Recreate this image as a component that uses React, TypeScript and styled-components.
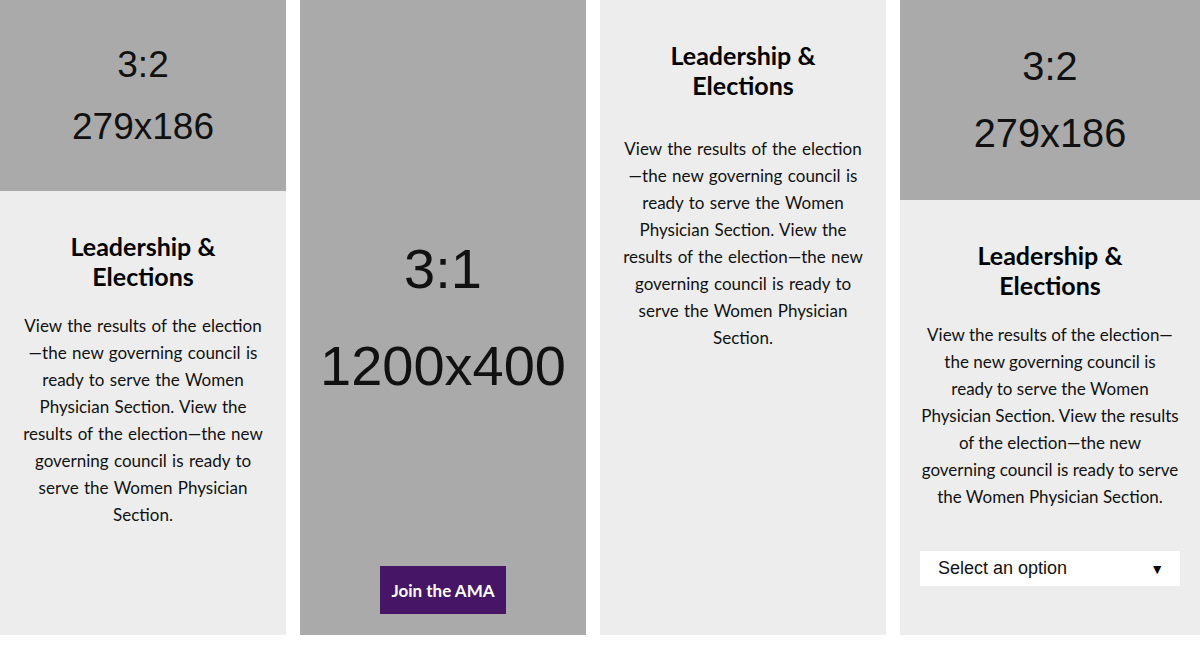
import React from 'react';
import styled, {createGlobalStyle} from 'styled-components';

const GlobalStyle = createGlobalStyle`
  html, body {
    margin: 0;
    padding: 0;
    background: #ffffff;
  }
  body {
    font-family: Lato, "Open Sans", sans-serif;
  }
`

const text = 'View the results of the election\u2014the new governing council is ready to serve the Women Physician Section. View the results of the election\u2014the new governing council is ready to serve the Women Physician Section.'

// the wide card breaks its copy at fixed points
const wideLines = [
    'View the results of the election\u2014',
    'the new governing council is',
    'ready to serve the Women',
    'Physician Section. View the results',
    'of the election\u2014the new',
    'governing council is ready to serve',
    'the Women Physician Section.',
]

const Placeholder: React.FC<{ratio: string, size: string, height: string, scale: number}> = ({ratio, size, height, scale}) => (
    <ImageBox height={height} scale={scale}>
        <PlaceholderLine size={37 * scale}>{ratio}</PlaceholderLine>
        <PlaceholderLine size={37 * scale}>{size}</PlaceholderLine>
    </ImageBox>
)

const CardText: React.FC<{wideGap?: boolean, lines?: string[]}> = ({wideGap, lines}) => (
    <>
        <Title wideGap={wideGap}>Leadership &amp;<br/>Elections</Title>
        {lines
            ? <Body fixed>{lines.map((l, i) => <React.Fragment key={i}>{l}{i < lines.length - 1 && <br/>}</React.Fragment>)}</Body>
            : <Body>{text}</Body>}
    </>
)

export default function App() {
    return (
        <>
            <GlobalStyle/>
            <Row>
                <Card width={286}>
                    <Placeholder ratio={'3:2'} size={'279x186'} height={'191px'} scale={1}/>
                    <Content>
                        <CardText/>
                    </Content>
                </Card>

                <HeroCard>
                    <HeroImage>
                        <PlaceholderLine size={56}>3:1</PlaceholderLine>
                        <PlaceholderLine size={56}>1200x400</PlaceholderLine>
                    </HeroImage>
                    <JoinButton>Join the AMA</JoinButton>
                </HeroCard>

                <Card width={286}>
                    <Content>
                        <CardText wideGap/>
                    </Content>
                </Card>

                <Card width={300}>
                    <Placeholder ratio={'3:2'} size={'279x186'} height={'200px'} scale={1.075}/>
                    <Content>
                        <CardText lines={wideLines}/>
                        <SelectBox>
                            <span>Select an option</span>
                            <Arrow>&#9660;</Arrow>
                        </SelectBox>
                    </Content>
                </Card>
            </Row>
        </>
    );
}

const Row = styled.div`
  display: flex;
  gap: 14px;
  height: 635px;
  align-items: stretch;
`
const Card = styled.div<{width: number}>`
  width: ${p => p.width}px;
  flex-shrink: 0;
  display: flex;
  flex-direction: column;
  background-color: #ededed;
`
const ImageBox = styled.div<{height: string, scale: number}>`
  height: ${p => p.height};
  flex-shrink: 0;
  background-color: #aaaaaa;
  display: flex;
  flex-direction: column;
  align-items: center;
  justify-content: center;
  gap: ${p => Math.round(32 * p.scale)}px;
`
const PlaceholderLine = styled.div<{size: number}>`
  font-family: "Liberation Sans", Arial, sans-serif;
  font-size: ${p => p.size}px;
  line-height: ${p => Math.round(p.size * 0.82)}px;
  color: #111111;
  text-align: center;
`
const Content = styled.div`
  padding: 40px 20px 0;
  display: flex;
  flex-direction: column;
  align-items: center;
  text-align: center;
`
const Title = styled.h2<{wideGap?: boolean}>`
  margin: 0 0 ${p => p.wideGap ? '35px' : '21px'};
  font-family: Lato, sans-serif;
  font-size: 25px;
  line-height: 30px;
  font-weight: 700;
  color: #000000;
`
const Body = styled.p<{fixed?: boolean}>`
  margin: 0;
  font-family: Lato, sans-serif;
  font-size: 17px;
  word-spacing: ${p => p.fixed ? '0' : '1px'};
  white-space: ${p => p.fixed ? 'nowrap' : 'normal'};
  line-height: 27px;
  color: #111111;
`
const HeroCard = styled.div`
  width: 286px;
  flex-shrink: 0;
  background-color: #aaaaaa;
  display: flex;
  flex-direction: column;
  align-items: center;
  padding-bottom: 21px;
  box-sizing: border-box;
`
const HeroImage = styled.div`
  flex: 1;
  display: flex;
  flex-direction: column;
  align-items: center;
  justify-content: center;
  gap: 51px;
  padding-top: 68px;
`
const JoinButton = styled.button`
  width: 126px;
  height: 48px;
  border: none;
  background-color: #461566;
  color: #ffffff;
  font-family: Lato, sans-serif;
  font-size: 17px;
  font-weight: 700;
  cursor: pointer;
`
const SelectBox = styled.div`
  align-self: stretch;
  margin-top: 41px;
  height: 35px;
  background: #ffffff;
  display: flex;
  align-items: center;
  justify-content: space-between;
  padding: 0 16px 0 18px;
  font-family: "Liberation Sans", Arial, sans-serif;
  font-size: 18px;
  color: #111111;
`
const Arrow = styled.span`
  font-size: 14px;
  color: #000000;
`
